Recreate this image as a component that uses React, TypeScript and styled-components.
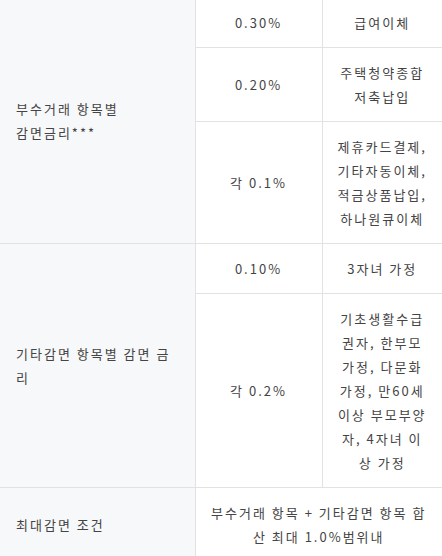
import React from "react";
import styled, { createGlobalStyle } from "styled-components";

const Global = createGlobalStyle`
  html, body { margin: 0; padding: 0; background: #fff; }
  body { font-family: "Noto Sans CJK KR", "Noto Sans", sans-serif; }
`;

const Table = styled.table`
  width: 442px;
  margin-top: -2px;
  border-collapse: collapse;
  table-layout: fixed;
  font-size: 13px;
  line-height: 24px;
  letter-spacing: 2px;
  color: #444;
  word-break: break-all;
`;

const Row = styled.tr<{ $last?: boolean }>`
  border-bottom: ${(p) => (p.$last ? "none" : "1px solid #e2e2e2")};
`;

const Head = styled.th`
  background: #f7f8fa;
  text-align: left;
  font-weight: 400;
  vertical-align: middle;
  padding: 12.5px 20px 12.5px 16px;
  border-right: 1px solid #e2e2e2;
`;

const Cell = styled.td<{ $divider?: boolean; $wide?: boolean }>`
  text-align: center;
  vertical-align: middle;
  padding: ${(p) => (p.$wide ? "12.5px 10px" : "12.5px 15px")};
  border-right: ${(p) => (p.$divider ? "1px solid #e2e2e2" : "none")};
`;

export default function App() {
  return (
    <>
      <Global />
      <Table>
        <colgroup>
          <col style={{ width: 195 }} />
          <col style={{ width: 127 }} />
          <col style={{ width: 120 }} />
        </colgroup>
        <tbody>
          <Row>
            <Head rowSpan={3}>
              부수거래 항목별
              <br />
              감면금리***
            </Head>
            <Cell $divider>0.30%</Cell>
            <Cell>급여이체</Cell>
          </Row>
          <Row>
            <Cell $divider>0.20%</Cell>
            <Cell>
              주택청약종합
              <br />
              저축납입
            </Cell>
          </Row>
          <Row>
            <Cell $divider>각 0.1%</Cell>
            <Cell>
              제휴카드결제,
              <br />
              기타자동이체,
              <br />
              적금상품납입,
              <br />
              하나원큐이체
            </Cell>
          </Row>
          <Row>
            <Head rowSpan={2}>기타감면 항목별 감면 금리</Head>
            <Cell $divider>0.10%</Cell>
            <Cell>3자녀 가정</Cell>
          </Row>
          <Row>
            <Cell $divider>각 0.2%</Cell>
            <Cell>
              기초생활수급권자, 한부모가정, 다문화가정, 만60세이상 부모부양자, 4자녀 이상 가정
            </Cell>
          </Row>
          <Row $last>
            <Head>최대감면 조건</Head>
            <Cell colSpan={2} $wide>
              부수거래 항목 + 기타감면 항목 합산 최대 1.0%범위내
            </Cell>
          </Row>
        </tbody>
      </Table>
    </>
  );
}
